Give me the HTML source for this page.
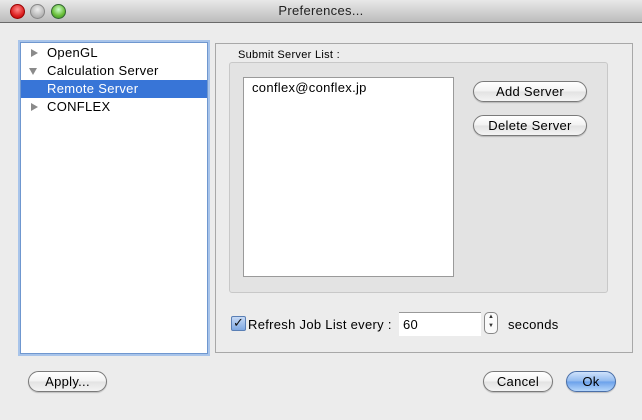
<!DOCTYPE html>
<html><head><style>
body{margin:0;width:642px;height:420px;overflow:hidden;background:#ececec;font-family:"Lucida Grande","Liberation Sans",sans-serif;font-size:13px;letter-spacing:0.3px;color:#000;position:relative}
.a{position:absolute}
.tb{left:0;top:0;width:642px;height:22px;background:linear-gradient(#e8e8e8,#bcbcbc);border-bottom:1px solid #6a6a6a;text-align:center;line-height:22px;font-size:13px;color:#222}
.dot{width:13px;height:13px;border-radius:50%;top:4px}
.btn{border:1px solid #7a7a7a;border-radius:11px;background:linear-gradient(#fff,#f2f2f2 50%,#e2e2e2 51%,#f4f4f4);text-align:center;line-height:19px;height:19px;box-shadow:0 1px 1px rgba(0,0,0,.2)}
.tri{width:0;height:0}
</style></head><body>
<div class="a tb">Preferences...</div>
<div class="a dot" style="left:10px;background:radial-gradient(circle at 50% 35%,#f88,#d22 60%,#a00);border:1px solid #900"></div>
<div class="a dot" style="left:30px;background:radial-gradient(circle at 50% 35%,#eee,#bbb 60%,#999);border:1px solid #888"></div>
<div class="a dot" style="left:51px;background:radial-gradient(circle at 50% 35%,#cfc,#6b3 60%,#383);border:1px solid #363"></div>

<div class="a" style="left:20px;top:42px;width:186px;height:310px;background:#fff;border:1px solid #6f97cf;box-shadow:0 0 0 2px #a8c4ea"></div>
<div class="a tri" style="left:31px;top:49px;border-left:7px solid #8a8a8a;border-top:4px solid transparent;border-bottom:4px solid transparent"></div>
<div class="a" style="left:47px;top:45px">OpenGL</div>
<div class="a tri" style="left:29px;top:68px;border-top:7px solid #8a8a8a;border-left:4px solid transparent;border-right:4px solid transparent"></div>
<div class="a" style="left:47px;top:63px">Calculation Server</div>
<div class="a" style="left:21px;top:80px;width:186px;height:18px;background:#3875d7"></div>
<div class="a" style="left:47px;top:81px;color:#fff">Remote Server</div>
<div class="a tri" style="left:31px;top:103px;border-left:7px solid #8a8a8a;border-top:4px solid transparent;border-bottom:4px solid transparent"></div>
<div class="a" style="left:47px;top:99px">CONFLEX</div>

<div class="a" style="left:215px;top:43px;width:416px;height:308px;border:1px solid #a8a8a8;background:#ececec"></div>
<div class="a" style="left:238px;top:49px;font-size:11px">Submit Server List :</div>
<div class="a" style="left:229px;top:62px;width:377px;height:229px;background:#e3e3e3;border:1px solid #c8c8c8;border-radius:3px"></div>
<div class="a" style="left:243px;top:77px;width:209px;height:198px;background:#fff;border:1px solid #9a9a9a"></div>
<div class="a" style="left:252px;top:80px">conflex@conflex.jp</div>
<div class="a btn" style="left:473px;top:81px;width:112px">Add Server</div>
<div class="a btn" style="left:473px;top:115px;width:112px">Delete Server</div>

<div class="a" style="left:231px;top:316px;width:13px;height:13px;border:1px solid #5a7fb5;border-radius:2px;background:linear-gradient(#c7daf5,#7fa8e2);font-size:13px;line-height:12px;text-align:center;color:#111;letter-spacing:0">✓</div>
<div class="a" style="left:248px;top:317px">Refresh Job List every :</div>
<div class="a" style="left:399px;top:312px;width:82px;height:23px;background:#fff;border-top:1px solid #999"></div>
<div class="a" style="left:403px;top:317px">60</div>
<div class="a" style="left:484px;top:312px;width:12px;height:20px;border:1px solid #888;border-radius:5px;background:#fafafa;font-size:6px;line-height:9px;text-align:center;color:#333;letter-spacing:0">▲<br>▼</div>
<div class="a" style="left:508px;top:317px">seconds</div>

<div class="a btn" style="left:28px;top:371px;width:77px">Apply...</div>
<div class="a btn" style="left:483px;top:371px;width:68px">Cancel</div>
<div class="a btn" style="left:566px;top:371px;width:48px;border-color:#4a6fa8;background:linear-gradient(#cfe2fb,#8fb9ef 50%,#6aa0ea 51%,#b5d6fb)">Ok</div>
</body></html>
